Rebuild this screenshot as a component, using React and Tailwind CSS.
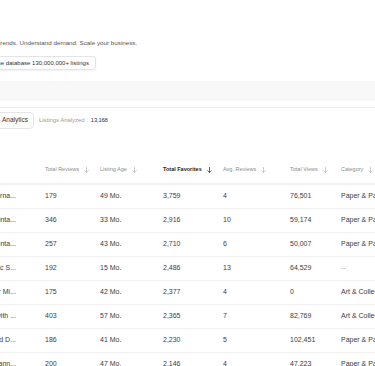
import React from 'react';

const rows = [
  { name: 'Printable Bullet Journa...', reviews: '179', age: '49 Mo.', favs: '3,759', avg: '4', views: '76,501', cat: 'Paper & Party Supplies' },
  { name: 'Wedding Planner Printa...', reviews: '346', age: '33 Mo.', favs: '2,916', avg: '10', views: '59,174', cat: 'Paper & Party Supplies' },
  { name: 'Budget Binder Printa...', reviews: '257', age: '43 Mo.', favs: '2,710', avg: '6', views: '50,007', cat: 'Paper & Party Supplies' },
  { name: 'Boho Wall Art Geometric S...', reviews: '192', age: '15 Mo.', favs: '2,486', avg: '13', views: '64,529', cat: '--' },
  { name: 'Vintage Botanical Poster Mi...', reviews: '175', age: '42 Mo.', favs: '2,377', avg: '4', views: '0', cat: 'Art & Collectibles' },
  { name: 'Custom Family Portrait with ...', reviews: '403', age: '57 Mo.', favs: '2,365', avg: '7', views: '82,769', cat: 'Art & Collectibles' },
  { name: 'Meal Planner Weekly and D...', reviews: '186', age: '41 Mo.', favs: '2,230', avg: '5', views: '102,451', cat: 'Paper & Party Supplies' },
  { name: 'Digital Sticker Book Plann...', reviews: '200', age: '47 Mo.', favs: '2,146', avg: '4', views: '47,223', cat: 'Paper & Party Supplies' },
];

const columns = [
  { label: 'Total Reviews', key: 'reviews' },
  { label: 'Listing Age', key: 'age' },
  { label: 'Total Favorites', key: 'favs', active: true },
  { label: 'Avg. Reviews', key: 'avg' },
  { label: 'Total Views', key: 'views' },
  { label: 'Category', key: 'cat' },
];

const SortArrow = ({ active }) => (
  <svg width="5" height="6" viewBox="0 0 10 12" fill="none" stroke={active ? '#222' : '#b5b5b5'} strokeWidth="1.4" strokeLinecap="round" strokeLinejoin="round">
    <path d="M5 1v10M1.5 7.5 5 11l3.5-3.5" />
  </svg>
);

const gridCols = 'grid grid-cols-[145px_55px_63px_60px_67px_51px_80px]';

const App = () => {
  return (
    <div className="w-[375px] h-[366px] overflow-hidden bg-white font-['Liberation_Sans',Arial,sans-serif]">
      {/* Hero */}
      <div className="pt-[39px]">
        <p className="-ml-[16px] whitespace-nowrap text-[6.25px] leading-[8px] text-[#555]">
          Spot trends. Understand demand. Scale your business.
        </p>
        <button className="mt-[9px] -ml-[32px] h-[14px] inline-flex items-center whitespace-nowrap rounded-[3px] border border-[#e4e4e4] bg-white px-[6px] text-[6px] text-[#333] shadow-[0_1px_2px_rgba(0,0,0,0.06)]">
          Search the database 130,000,000+ listings
        </button>
      </div>

      {/* Search band */}
      <div className="mt-[9px] h-[20px] bg-[#f8f8f8]" />
      <div className="mt-[6px] h-px bg-[#ededed]" />

      {/* Toolbar */}
      <div className="mt-[4px] flex items-center gap-[5px] h-[17px]">
        <button className="-ml-[4px] h-[17px] flex items-center rounded-[4px] border border-[#e6e6e6] px-[5px] text-[6.5px] text-[#333] whitespace-nowrap">
          Analytics
        </button>
        <div className="flex items-center gap-[3px] whitespace-nowrap text-[5.9px]">
          <span className="text-[#9a9a9a]">Listings Analyzed :</span>
          <span className="text-[#333] tracking-[-0.2px]">13,168</span>
        </div>
      </div>

      {/* Table */}
      <div className="mt-[28px] -ml-[100px] w-[521px]">
        <div className={`${gridCols} h-[28px] items-center border-b-2 border-[#f1f1f1]`}>
          <div />
          {columns.map((c) => (
            <div
              key={c.key}
              className={`flex items-center gap-[5px] whitespace-nowrap text-[5.5px] ${c.active ? 'font-bold text-[#222]' : 'text-[#8c8c8c]'}`}
            >
              {c.label}
              <SortArrow active={c.active} />
            </div>
          ))}
        </div>
        {rows.map((r, i) => (
          <div key={i} className={`${gridCols} h-[24px] items-center border-b border-[#f1f1f1] text-[7px] text-[#3d3d3d]`}>
            <div className="flex justify-end pr-[29px] overflow-hidden whitespace-nowrap">
              <span>{r.name}</span>
            </div>
            <div>{r.reviews}</div>
            <div>{r.age}</div>
            <div>{r.favs}</div>
            <div>{r.avg}</div>
            <div>{r.views}</div>
            <div className={`whitespace-nowrap ${r.cat === '--' ? 'text-[#aaa]' : ''}`}>{r.cat}</div>
          </div>
        ))}
      </div>
    </div>
  );
};

export default App;
